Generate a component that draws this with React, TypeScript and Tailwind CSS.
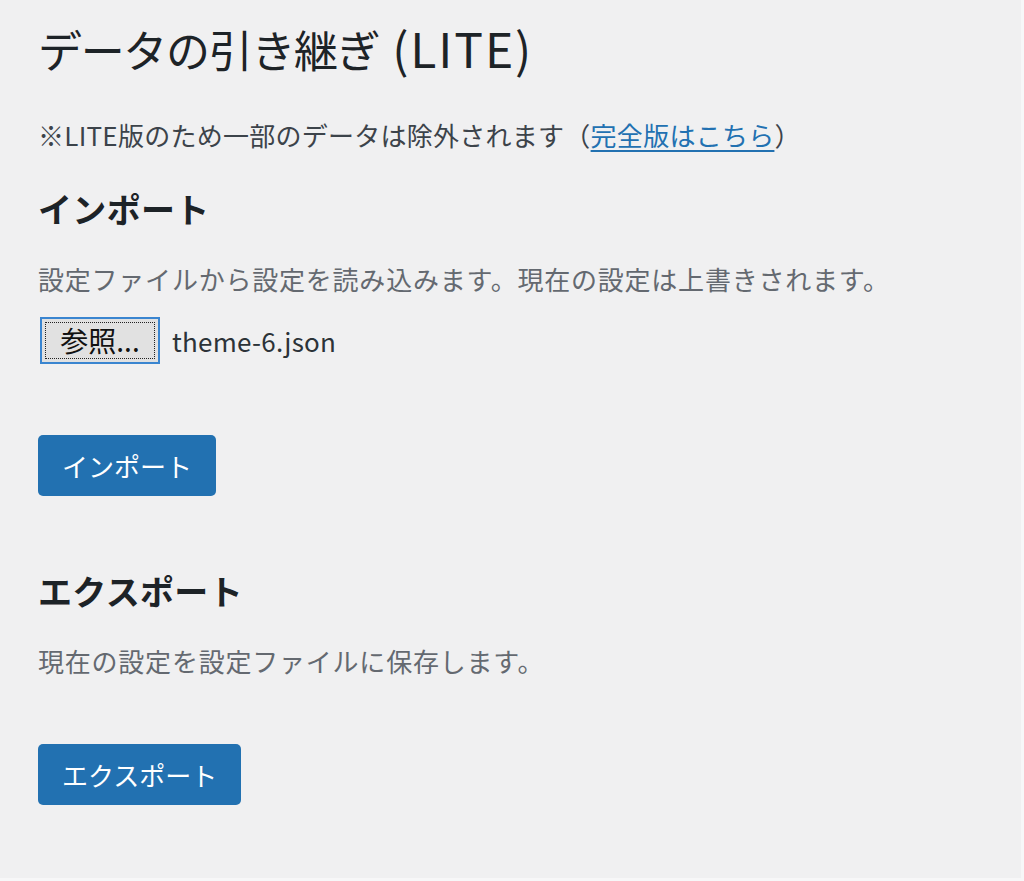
import React from "react";

const jp = '"Noto Sans CJK JP", "Noto Sans", sans-serif';

export default function App() {
  return (
    <div
      className="min-h-[881px] w-full bg-[#f0f0f1] border-r-[3px] border-b-[3px] border-[#f7f7f8]"
      style={{ fontFamily: jp }}
    >
      <div className="pl-[38px] pt-[15px]">
        <h1 className="text-[44px] leading-[64px] text-[#1d2327] font-normal">
          <span className="tracking-[-0.03em]">データの引き継ぎ</span>
          <span className="text-[48px] tracking-[0.04em]"> (LITE)</span>
        </h1>

        <p className="mt-[36px] text-[26px] leading-[36px] text-[#3c434a] tracking-[0.01em]">
          ※LITE版のため一部のデータは除外されます（
          <a className="text-[#2271b1] underline underline-offset-[4px] decoration-[2px]" href="#">
            完全版はこちら
          </a>
          ）
        </p>

        <h2 className="mt-[34px] text-[34px] leading-[44px] font-bold text-[#1d2327] tracking-[0.01em]">
          インポート
        </h2>

        <p className="mt-[28px] text-[26px] leading-[40px] text-[#646970] tracking-[0.03em]">
          設定ファイルから設定を読み込みます。現在の設定は上書きされます。
        </p>

        <div className="mt-[18px] flex items-center">
          <div className="ml-[2px] w-[120px] h-[47px] border-[2px] border-[#3a85d0] bg-[#e1e1e1] p-[3px]">
            <div className="w-full h-full border border-dotted border-[#222] flex items-center justify-center text-[28px] text-[#111] leading-none pb-[2px]">
              参照...
            </div>
          </div>
          <span className="ml-[12px] text-[26px] text-[#2c3338] tracking-[0.01em]">theme-6.json</span>
        </div>

        <button className="mt-[71px] h-[61px] px-[24px] rounded-[5px] bg-[#2271b1] text-white text-[26px] leading-none block">
          インポート
        </button>

        <h2 className="mt-[73px] text-[34px] leading-[44px] font-bold text-[#1d2327] tracking-[0.01em]">
          エクスポート
        </h2>

        <p className="mt-[28px] text-[26px] leading-[40px] text-[#646970] tracking-[0.03em]">
          現在の設定を設定ファイルに保存します。
        </p>

        <button className="mt-[63px] h-[61px] px-[24px] rounded-[5px] bg-[#2271b1] text-white text-[26px] leading-none block">
          エクスポート
        </button>
      </div>
    </div>
  );
}
